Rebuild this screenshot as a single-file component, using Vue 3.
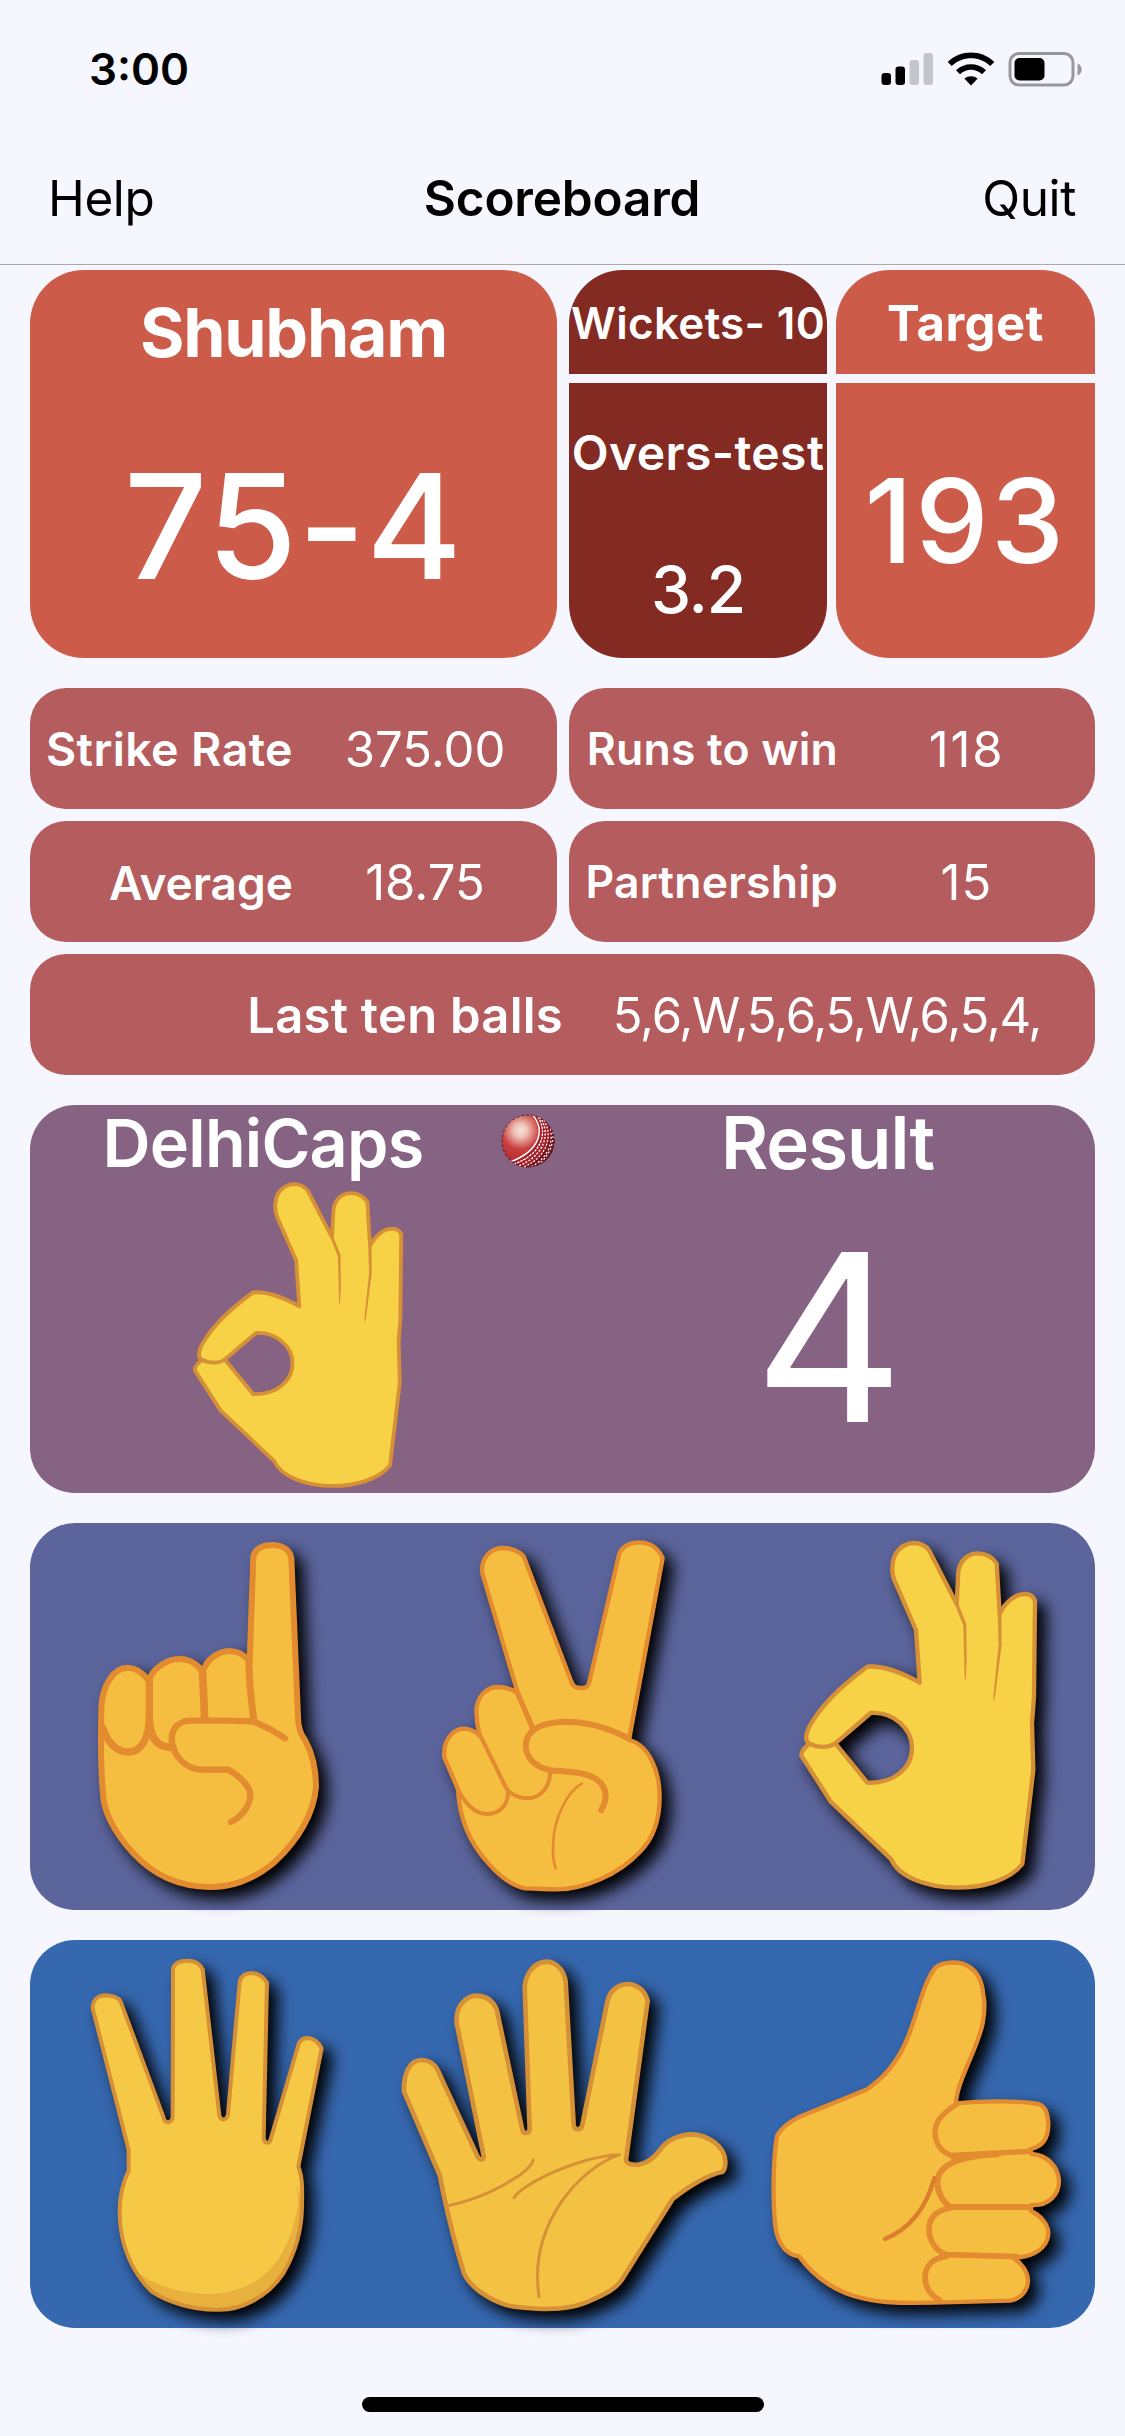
<script setup>
const stats = [
  { id: 'rate', label: 'Strike Rate', value: '375.00' },
  { id: 'runs', label: 'Runs to win', value: '118' },
  { id: 'avg', label: 'Average', value: '18.75' },
  { id: 'pair', label: 'Partnership', value: '15' },
  { id: 'balls', label: 'Last ten balls', value: '5,6,W,5,6,5,W,6,5,4,' },
]

const okHand = {
  body: 'M449 518 L438 360 L375 215 C362 190 366 150 378 130 C395 105 415 99 432 99 C455 99 468 108 478 122 L560 282 L565 185 C570 150 595 130 624 130 C650 130 668 142 680 160 L689 312 C705 277 735 252 765 252 C780 252 790 260 795 272 L792 560 L786 640 L790 780 L757 1062 C720 1110 640 1133 562 1133 C470 1133 385 1100 364 1048 L182 875 L94 737 C93 725 105 712 117 702 C103 690 108 670 118 650 C150 590 210 530 292 470 C345 466 400 490 449 518 Z M196 700 L292 818 C370 822 426 775 426 713 C426 655 370 605 302 609 Z',
  knuckle: 'M117 700 C140 713 175 715 196 700',
  folds: 'M553 278 L580 347 L584 500 L587 514 L590 450 L589 342 L566 284 Z M683 315 L686 402 L670 560 L672 576 L677 545 L695 403 L694 312 Z',
}
</script>

<template>
  <div class="screen">
    <div class="status">
      <span class="time">3:00</span>
      <svg class="status-icons" viewBox="0 0 202 36" width="202" height="36">
        <rect x="1.5" y="22" width="9.5" height="12" rx="3" />
        <rect x="15.5" y="15.5" width="9.5" height="18.5" rx="3" />
        <g fill="#c4c4cc">
          <rect x="29.5" y="9" width="9.5" height="25" rx="3" />
          <rect x="43.5" y="2" width="9.5" height="32" rx="3" />
        </g>
        <path d="M91 34.5 L84.3 27.6 C88 24.3 94 24.3 97.7 27.6 Z" />
        <path d="M80 23.2 C86.2 17.2 95.8 17.2 102 23.2 L106 19.2 C97.5 11.3 84.5 11.3 76 19.2 Z" />
        <path d="M71.8 15 C82.5 4.7 99.5 4.7 110.2 15 L114.3 10.9 C101.3 -1.7 80.7 -1.7 67.7 10.9 Z" />
        <rect x="130" y="2.5" width="63" height="31.5" rx="9" fill="none" stroke="#97979c" stroke-width="3" />
        <rect x="134.5" y="7" width="30" height="22.5" rx="5" />
        <path d="M197.5 12.5 C203 14.5 203 22.5 197.5 24.5 Z" fill="#97979c" />
      </svg>
    </div>

    <header class="nav">
      <span class="nav-left">Help</span>
      <h1>Scoreboard</h1>
      <span class="nav-right">Quit</span>
    </header>

    <main>
      <section class="scores">
        <div class="team">
          <div class="team-name"><span>Shubham</span></div>
          <div class="team-score"><span>75-4</span></div>
        </div>
        <div class="stack dark">
          <div class="cap"><span class="t-wickets">Wickets- 10</span></div>
          <div class="base">
            <div class="half"><span class="t-overs">Overs-test</span></div>
            <div class="half"><span class="t-done">3.2</span></div>
          </div>
        </div>
        <div class="stack warm">
          <div class="cap"><span class="t-target">Target</span></div>
          <div class="base"><div class="whole"><span class="t-goal">193</span></div></div>
        </div>
      </section>

      <section class="stats">
        <div v-for="s in stats" :key="s.id" class="stat" :class="s.id">
          <span class="label">{{ s.label }}</span>
          <span class="value">{{ s.value }}</span>
        </div>
      </section>

      <section class="panel play">
        <div class="player">
          <div class="player-head">
            <span class="player-name">DelhiCaps</span>
            <svg class="ball" viewBox="0 0 54 54" width="54" height="54">
              <defs>
                <radialGradient id="leather" cx=".36" cy=".3" r=".65">
                  <stop offset="0" stop-color="#f8e3da" />
                  <stop offset=".2" stop-color="#eec0b4" />
                  <stop offset=".55" stop-color="#c9403f" />
                  <stop offset="1" stop-color="#b3262c" />
                </radialGradient>
                <clipPath id="ball-edge"><circle cx="27" cy="27" r="26.3" /></clipPath>
              </defs>
              <circle cx="27" cy="27" r="26.3" fill="url(#leather)" />
              <g clip-path="url(#ball-edge)" fill="none">
                <path d="M31 -1 C45 15 39 39 9 49 L30 56 L56 40 L52 10 Z" fill="#a51f28" />
                <path d="M45 8 C54 24 46 42 24 53 L50 50 L56 22 Z" fill="#74151b" />
                <g stroke="#fff">
                  <path d="M31 0 C45 16 39 37 9 48" stroke-width="1.4" />
                  <path d="M35 0 C48 17 42 40 13 50" stroke-width="1.3" stroke-dasharray="2.5 1" />
                  <path d="M39 3 C50 19 44 42 17 52" stroke-width="1.4" stroke-dasharray="2 1.5" />
                  <path d="M43 6 C52 22 47 42 23 53" stroke-width="1.2" stroke-dasharray="2 1.5" />
                  <path d="M48 11 C54 25 48 44 30 53" stroke-width="1.3" stroke-dasharray="2 2" />
                  <path d="M52 18 C53 30 48 42 38 50" stroke-width="1.2" stroke-dasharray="2 2" />
                </g>
              </g>
              <circle cx="27" cy="27" r="26" fill="none" stroke="#3b1118" stroke-width=".8" stroke-dasharray="3 2" />
            </svg>
          </div>
          <svg class="thrown" viewBox="88 92 713 1048" width="210" height="306" preserveAspectRatio="none">
            <g class="ok">
              <path :d="okHand.body" />
              <path class="line" :d="okHand.knuckle" />
              <path class="fold" :d="okHand.folds" />
            </g>
          </svg>
        </div>
        <div class="outcome">
          <div class="outcome-head">Result</div>
          <div class="outcome-value">4</div>
        </div>
      </section>

      <section class="panel low">
        <svg viewBox="0 39 930 1161" width="310" height="387">
          <g class="gold">
            <path d="M124 600 C124 530 160 473 203 473 C230 473 250 490 266 512 C280 472 325 447 358 447 C395 447 422 470 427 490 C438 445 480 423 508 423 C536 424 556 436 569 455 L580 140 C587 113 612 105 638 105 C665 105 690 118 694 145 L714 620 C714 655 722 673 735 690 C760 735 768 785 768 830 C762 910 715 990 645 1055 C585 1106 520 1131 450 1131 C360 1131 280 1095 220 1030 C160 965 130 900 129 850 C122 780 122 690 124 600 Z" stroke-width="18" />
            <path class="line" d="M268 512 V620 C268 682 245 726 205 726 C172 726 142 700 129 655" stroke-width="22" />
            <path class="line" d="M428 490 L434 625 M269 640 C274 690 297 715 338 711" stroke-width="23" />
            <path class="line" d="M567 455 C567 520 575 580 581 626" stroke-width="21" />
            <path class="line" d="M675 685 L632 658 L580 634 L500 632 H390 C355 634 335 655 335 690 C339 740 380 778 425 779 L505 779 C542 800 571 830 571 855 C570 888 545 920 513 936" stroke-width="19" />
          </g>
        </svg>
        <svg viewBox="0 39 930 1161" width="310" height="387">
          <g class="gold">
            <path d="M144 838 L103 742 C98 690 130 656 162 656 C185 657 198 665 209 677 C202 650 198 620 200 590 C208 550 235 531 265 531 C285 532 305 538 323 548 L217 190 C212 145 240 115 277 114 C305 114 325 122 341 139 L483 512 C489 533 500 534 512 534 C530 534 535 530 538 515 L628 130 C640 105 665 97 689 97 C720 97 745 115 758 144 L657 690 C720 705 749 790 749 860 C749 930 730 985 690 1025 C625 1095 520 1138 440 1138 C400 1138 370 1135 345 1135 C310 1128 270 1100 235 1060 C180 1000 148 930 144 838 Z" stroke-width="13" />
            <path class="line" d="M144 838 C170 893 205 912 232 912 C270 910 295 885 294 845 M210 675 L290 837 C310 860 335 865 355 865 C395 862 420 830 420 785" stroke-width="12" />
            <path class="line" d="M321 545 L368 655" stroke-width="16" />
            <path class="line" d="M655 685 C590 650 520 635 465 635 C400 637 347 655 347 710 C350 755 390 776 430 782 C490 786 530 788 558 807 C590 830 595 862 574 900" stroke-width="18" />
            <path class="line" d="M516 820 C470 845 430 930 430 1000 C427 1030 430 1055 437 1074" stroke-width="8" />
          </g>
        </svg>
        <svg viewBox="0 39 975 1161" width="325" height="387">
          <g class="ok">
            <path :d="okHand.body" />
            <path class="line" :d="okHand.knuckle" />
            <path class="fold" :d="okHand.folds" />
          </g>
        </svg>
      </section>

      <section class="panel high">
        <svg viewBox="30 30 1020 1164" width="340" height="388">
          <g class="four">
            <path stroke="none" d="M326 660 L218 235 C218 205 240 196 258 196 C280 197 295 202 302 215 L430 560 C433 582 457 582 458 560 L459 115 C465 95 485 92 502 92 C525 92 540 100 548 118 L598 555 C600 573 621 573 624 552 L659 155 C664 135 680 129 695 129 C715 130 730 140 741 158 L731 625 C733 642 748 643 752 628 L835 345 C840 328 850 324 863 324 C880 325 895 335 905 355 L835 710 C848 740 847 780 846 830 C845 900 825 970 790 1030 C740 1105 660 1139 600 1139 C520 1142 440 1115 395 1085 C340 1030 300 950 299 850 C298 800 305 765 326 722 Z" />
            <path fill="#e8b03c" stroke="none" d="M355 1030 C420 1075 500 1092 570 1092 C720 1085 805 1000 835 820 L830 760 L846 830 C845 900 825 970 790 1030 C740 1105 660 1139 600 1139 C520 1142 440 1115 395 1085 Z" />
            <path fill="none" d="M326 660 L218 235 C218 205 240 196 258 196 C280 197 295 202 302 215 L430 560 C433 582 457 582 458 560 L459 115 C465 95 485 92 502 92 C525 92 540 100 548 118 L598 555 C600 573 621 573 624 552 L659 155 C664 135 680 129 695 129 C715 130 730 140 741 158 L731 625 C733 642 748 643 752 628 L835 345 C840 328 850 324 863 324 C880 325 895 335 905 355 L835 710 C848 740 847 780 846 830 C845 900 825 970 790 1030 C740 1105 660 1139 600 1139 C520 1142 440 1115 395 1085 C340 1030 300 950 299 850 C298 800 305 765 326 722 Z" />
          </g>
        </svg>
        <svg viewBox="0 30 1110 1164" width="370" height="388">
          <g class="five">
            <path d="M180 738 L72 485 C70 430 90 390 124 390 C145 390 162 400 172 418 L293 680 C300 692 312 690 311 678 L230 280 C225 220 265 197 290 197 C320 198 340 215 350 238 L427 600 C430 613 448 612 449 598 L434 170 C438 125 468 95 500 95 C532 96 553 125 557 155 L581 585 C583 602 603 602 607 585 L682 215 C690 180 715 163 742 162 C770 162 795 180 803 212 L738 690 C740 703 760 705 775 704 C805 700 825 680 840 660 C860 630 900 613 937 613 C985 615 1036 650 1036 695 C1036 710 1035 718 1028 725 C980 735 925 770 878 807 L725 1050 C705 1078 680 1090 635 1110 C600 1128 550 1137 495 1137 C440 1135 400 1133 375 1124 C320 1105 270 1070 252 1030 C230 960 205 860 190 790 Z" stroke-width="14" />
            <path class="line" d="M203 827 C290 810 360 775 420 735 C445 717 455 705 460 690 M402 803 C420 767 590 680 718 674 C600 715 445 880 477 1100" stroke-width="9" />
          </g>
        </svg>
        <svg viewBox="0 30 1035 1164" width="345" height="388">
          <g class="gold">
            <path d="M618 520 C618 460 685 350 698 280 C705 240 705 215 700 195 C696 145 675 112 635 100 C610 95 575 97 557 112 C525 150 510 220 487 285 C465 355 430 410 390 447 L352 478 L145 562 C110 580 90 600 81 618 C70 680 67 800 76 890 C85 950 115 975 147 979 C200 1050 270 1090 340 1105 C400 1120 470 1119 550 1118 L780 1112 C815 1105 833 1080 834 1052 C833 1025 815 1000 792 985 L825 979 C870 970 895 940 895 908 C893 880 870 855 842 842 L845 825 C895 828 927 795 927 752 C925 715 895 675 845 672 L840 658 C880 650 896 620 895 580 C892 545 885 528 865 522 C810 512 700 512 618 520 Z" stroke-width="13" />
            <path class="line" d="M618 524 C572 553 555 577 555 608 C556 642 575 667 604 676 L838 664" stroke-width="16" />
            <path class="line" d="M740 673 C610 680 562 712 562 758 C563 788 578 816 600 831 H840" stroke-width="18" />
            <path class="line" d="M720 670 L610 682 M600 834 C556 842 537 865 537 900 C538 935 560 965 590 974 L800 980 M590 979 C545 984 525 1010 525 1045 C527 1075 543 1096 568 1110" stroke-width="17" />
            <path class="line" d="M553 745 C528 835 482 895 405 927" stroke="#da7e2c" stroke-width="13" />
          </g>
        </svg>
      </section>
    </main>

    <div class="home"></div>
  </div>
</template>

<style>
html,
body {
  background: #f6f6ff;
}
</style>

<style scoped>
.screen {
  box-sizing: border-box;
  width: 1125px;
  height: 2436px;
  overflow: hidden;
  display: flex;
  flex-direction: column;
  background: #f6f6ff;
  color: #000;
  font-family: Inter, 'Liberation Sans', sans-serif;
  line-height: 1;
  white-space: nowrap;
}

.status {
  height: 132px;
  padding: 4px 43px 0 89px;
  box-sizing: border-box;
  display: flex;
  align-items: center;
  justify-content: space-between;
}
.time {
  padding-top: 2px;
  font-size: 44px;
  font-weight: 600;
}
.status-icons {
  display: block;
  margin-top: 2px;
}

.nav {
  height: 133px;
  box-sizing: border-box;
  border-bottom: 1px solid #a8a8ae;
  padding: 2px 49px 0 48px;
  display: grid;
  grid-template-columns: 1fr auto 1fr;
  align-items: center;
  font-size: 49.5px;
  letter-spacing: -0.4px;
}
.nav h1 {
  margin: 0;
  font-size: 49.5px;
  font-weight: 600;
  letter-spacing: -0.2px;
}
.nav-right {
  text-align: right;
}

main {
  padding: 5px 30px 0;
}

.scores {
  height: 388px;
  display: flex;
  color: #fff;
}
.scores span {
  padding-top: 2px;
}
.team {
  width: 527px;
  margin-right: 12px;
  border-radius: 54px;
  background: #cd5b49;
  display: grid;
  grid-template-rows: 122px 266px;
}
.team > div,
.cap,
.half,
.whole {
  display: flex;
  align-items: center;
  justify-content: center;
}
.team-name {
  font-size: 68px;
  font-weight: 700;
  letter-spacing: -1.3px;
}
.team-score {
  font-size: 146px;
  font-weight: 500;
  letter-spacing: 0.8px;
}
.stack {
  width: 258px;
  display: grid;
  grid-template-rows: 104px 275px;
  gap: 9px;
}
.dark {
  margin-right: 9px;
}
.warm {
  width: 259px;
}
.cap {
  border-radius: 54px 54px 0 0;
}
.base {
  border-radius: 0 0 54px 54px;
}
.dark > div {
  background: #832a22;
}
.warm > div {
  background: #cd5b49;
}
.half {
  height: 137.5px;
}
.whole {
  height: 275px;
}
.t-wickets {
  font-size: 44px;
  font-weight: 600;
  letter-spacing: 0.3px;
}
.t-overs {
  font-size: 48px;
  font-weight: 600;
  letter-spacing: 0.4px;
}
.t-done {
  font-size: 64px;
  font-weight: 500;
  letter-spacing: -1.2px;
}
.t-target {
  font-size: 49px;
  font-weight: 700;
  letter-spacing: 0.4px;
}
.t-goal {
  font-size: 116.5px;
  font-weight: 500;
  letter-spacing: 2.4px;
}

.stats {
  margin-top: 30px;
  display: grid;
  grid-template-columns: 527px 526px;
  grid-auto-rows: 121px;
  gap: 12px;
  color: #fff;
}
.stat {
  border-radius: 36px;
  background: #b55c5e;
  display: flex;
  align-items: center;
}
.stat > span {
  padding-top: 2px;
}
.label {
  width: 263px;
  text-align: right;
  font-weight: 600;
}
.value {
  flex: 1;
  text-align: center;
  font-size: 49px;
}
.rate .label {
  font-size: 46.5px;
  letter-spacing: 0.4px;
}
.runs .label,
.pair .label {
  width: 269px;
  font-size: 44.5px;
  letter-spacing: 0.2px;
}
.runs .value {
  letter-spacing: 1.8px;
}
.pair .value {
  letter-spacing: 1.2px;
}
.avg .label {
  font-size: 46px;
}
.balls {
  grid-column: 1 / -1;
}
.balls .label {
  width: 533px;
  font-size: 49px;
  letter-spacing: 0.25px;
}
.balls .value {
  padding-right: 4px;
  letter-spacing: -1.2px;
}

.panel {
  margin-top: 30px;
  height: 388px;
  border-radius: 45px;
  display: flex;
}
.panel svg {
  display: block;
  flex: none;
  overflow: visible;
}

.play {
  background: #866283;
  color: #fff;
}
.player {
  width: 533px;
}
.player-head {
  height: 77px;
  display: flex;
  align-items: center;
}
.player-name {
  width: 466px;
  margin-right: 5px;
  text-align: center;
  font-size: 66.5px;
  font-weight: 600;
  letter-spacing: -0.8px;
}
.ball {
  margin-top: -6px;
}
.thrown {
  margin-left: 163px;
}
.outcome {
  flex: 1;
  text-align: center;
}
.outcome-head {
  height: 76px;
  padding-right: 3px;
  line-height: 76px;
  font-size: 72.5px;
  font-weight: 600;
  letter-spacing: -1px;
}
.outcome-value {
  height: 312px;
  line-height: 312px;
  font-size: 233px;
}

.low {
  height: 387px;
  background: #5b659c;
}
.low svg {
  filter: drop-shadow(9px 9px 8px #000);
}
.low svg:nth-child(1) {
  margin: 0 40px 0 30px;
}
.low svg:nth-child(2) {
  margin-right: 50px;
}
.high {
  background: #3668b0;
}
.high svg {
  filter: drop-shadow(9px 9px 8px #000);
}
.high svg:first-child {
  margin-right: 10px;
}

.gold,
.ok,
.four,
.five {
  stroke-linecap: round;
  stroke-linejoin: round;
}
.gold {
  fill: #f5be41;
  stroke: #e38b2f;
}
.ok {
  fill: #f7d246;
  fill-rule: evenodd;
  stroke: #d69035;
  stroke-width: 13px;
}
.four {
  fill: #f5c945;
  stroke: #d69035;
  stroke-width: 12px;
}
.five {
  fill: #f3c242;
  stroke: #d69035;
}
.line {
  fill: none;
}
.fold {
  fill: #d69035;
  stroke: none;
}

.home {
  width: 402px;
  height: 15px;
  margin: 69px 0 0 362px;
  border-radius: 8px;
  background: #000;
}
</style>
